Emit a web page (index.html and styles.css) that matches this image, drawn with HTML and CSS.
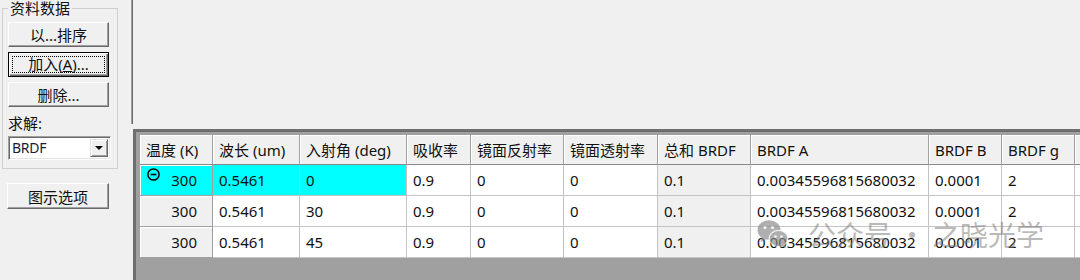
FILE: index.html
```html
<!DOCTYPE html>
<html lang="zh-CN">
<head>
    <meta charset="UTF-8">
    <title>BRDF 资料数据</title>
    <link rel="stylesheet" href="styles.css">
</head>
<body>
    <div class="window">
        <div class="side">
            <fieldset class="group">
                <legend>资料数据</legend>
                <button class="btn first">以...排序</button>
                <button class="btn default"><span class="focus">加入(<u>A</u>)...</span></button>
                <button class="btn">删除...</button>
                <div class="label">求解:</div>
                <div class="combo">
                    <span class="combo-text">BRDF</span>
                    <span class="combo-arrow"><span class="tri"></span></span>
                </div>
            </fieldset>
            <button class="btn plot">图示选项</button>
        </div>

        <div class="main">
            <div class="top-pane"></div>
            <div class="grid-frame">
                <table class="grid">
                    <colgroup>
                        <col style="width:73px">
                        <col style="width:87px">
                        <col style="width:107px">
                        <col style="width:64px">
                        <col style="width:93px">
                        <col style="width:94px">
                        <col style="width:93px">
                        <col style="width:178px">
                        <col style="width:73px">
                        <col style="width:73px">
                        <col style="width:80px">
                    </colgroup>
                    <tr>
                        <th>温度 (K)</th>
                        <th>波长 (um)</th>
                        <th>入射角 (deg)</th>
                        <th>吸收率</th>
                        <th>镜面反射率</th>
                        <th>镜面透射率</th>
                        <th>总和 BRDF</th>
                        <th>BRDF A</th>
                        <th>BRDF B</th>
                        <th>BRDF g</th>
                        <th></th>
                    </tr>
                    <tr>
                        <td class="rowhead sel">
                            <div class="rowhead-in">
                                <svg class="collapse" width="13" height="13" viewBox="0 0 13 13">
                                    <circle cx="6.5" cy="6.5" r="5.6" fill="none" stroke="#000" stroke-width="1.5"/>
                                    <path d="M3.6 6.5h5.8" stroke="#000" stroke-width="1.6"/>
                                </svg>
                                <span>300</span>
                            </div>
                        </td>
                        <td class="sel">0.5461</td>
                        <td class="sel">0</td>
                        <td>0.9</td>
                        <td>0</td>
                        <td>0</td>
                        <td class="ro">0.1</td>
                        <td>0.00345596815680032</td>
                        <td>0.0001</td>
                        <td>2</td>
                        <td></td>
                    </tr>
                    <tr>
                        <td class="rowhead">300</td>
                        <td>0.5461</td>
                        <td>30</td>
                        <td>0.9</td>
                        <td>0</td>
                        <td>0</td>
                        <td class="ro">0.1</td>
                        <td>0.00345596815680032</td>
                        <td>0.0001</td>
                        <td>2</td>
                        <td></td>
                    </tr>
                    <tr>
                        <td class="rowhead">300</td>
                        <td>0.5461</td>
                        <td>45</td>
                        <td>0.9</td>
                        <td>0</td>
                        <td>0</td>
                        <td class="ro">0.1</td>
                        <td>0.00345596815680032</td>
                        <td>0.0001</td>
                        <td>2</td>
                        <td></td>
                    </tr>
                </table>
            </div>
        </div>

        <!-- 水印 -->
        <div class="watermark">
            <svg class="wx" width="32" height="30" viewBox="0 0 32 30">
                <ellipse cx="12" cy="11" rx="11.5" ry="9.8" fill="#8c8c8c"/>
                <path d="M5 18 L3.5 23 L9.5 20 Z" fill="#8c8c8c"/>
                <ellipse cx="21.5" cy="19.5" rx="10" ry="8.5" fill="#f4f4f4"/>
                <ellipse cx="21.5" cy="19.5" rx="8.8" ry="7.4" fill="#8c8c8c"/>
                <path d="M27 25 L29 29 L24 26.5 Z" fill="#8c8c8c"/>
                <circle cx="8" cy="8.5" r="1.6" fill="#f4f4f4"/>
                <circle cx="15.5" cy="8.5" r="1.6" fill="#f4f4f4"/>
                <circle cx="18.5" cy="17.5" r="1.3" fill="#f4f4f4"/>
                <circle cx="24.5" cy="17.5" r="1.3" fill="#f4f4f4"/>
            </svg>
            <span class="wm-text">公众号</span>
            <span class="wm-dot">·</span>
            <span class="wm-text">之晓光学</span>
        </div>
    </div>
</body>
</html>
```

FILE: styles.css
```css
body {
    margin: 0;
    background-color: #f0f0f0;
    font-family: "Noto Sans", "Noto Sans CJK SC", sans-serif;
    font-size: 15px;
    color: #111;
    overflow: hidden;
}
.window {
    display: flex;
    height: 280px;
    width: 1080px;
    position: relative;
    overflow: hidden;
}

/* 左侧面板 */
.side {
    width: 131px;
    flex-shrink: 0;
}
.group {
    margin: 0 0 0 2px;
    padding: 0 0 8px 5px;
    width: 116px;
    min-width: 0;
    box-sizing: border-box;
    border: 1px solid #cfcfcf;
}
.group legend {
    padding: 0 2px;
    margin: 0;
    line-height: 16px;
    font-size: 15px;
}
.btn {
    display: flex;
    align-items: center;
    justify-content: center;
    width: 101px;
    height: 25px;
    margin: 5px 0 0 0;
    padding: 0;
    box-sizing: border-box;
    font-family: inherit;
    font-size: 15px;
    color: #111;
    background-color: #f0f0f0;
    border: 1px solid;
    border-color: #fff #696969 #696969 #fff;
    box-shadow: inset -1px -1px #a0a0a0;
}
.btn.first {
    margin-top: 6px;
}
.btn.default {
    border-color: #000;
    box-shadow: inset 1px 1px #fff, inset -1px -1px #696969, inset -2px -2px #a0a0a0;
}
.focus {
    display: block;
    width: 91px;
    line-height: 15px;
    border: 1px dotted #000;
}
.focus u {
    text-decoration-thickness: 1px;
    text-underline-offset: 1px;
}
.label {
    margin-top: 7px;
    line-height: 18px;
}
.combo {
    display: flex;
    margin-top: 4px;
    width: 103px;
    height: 24px;
    box-sizing: border-box;
    background-color: #fff;
    border: 1px solid;
    border-color: #a0a0a0 #fff #fff #a0a0a0;
    box-shadow: inset 1px 1px #696969, inset -1px -1px #e3e3e3;
    padding: 2px;
}
.combo-text {
    flex: 1;
    font-size: 14px;
    line-height: 18px;
    padding-left: 1px;
    letter-spacing: -0.3px;
    color: #1a1a3a;
}
.combo-arrow {
    width: 18px;
    display: flex;
    align-items: center;
    justify-content: center;
    box-sizing: border-box;
    background-color: #f0f0f0;
    border: 1px solid;
    border-color: #e3e3e3 #696969 #696969 #e3e3e3;
    box-shadow: inset 1px 1px #fff, inset -1px -1px #a0a0a0;
}
.tri {
    width: 0;
    height: 0;
    border-left: 4px solid transparent;
    border-right: 4px solid transparent;
    border-top: 4px solid #000;
}
.btn.plot {
    margin: 14px 0 0 7px;
    width: 102px;
    height: 26px;
}

/* 右侧 */
.main {
    flex: 1;
    display: flex;
    flex-direction: column;
    min-width: 0;
}
.top-pane {
    height: 124px;
    flex-shrink: 0;
    border-left: 1px solid #a0a0a0;
    box-shadow: inset 1px 0 #696969;
    margin-bottom: 5px;
}
.grid-frame {
    flex: 1;
    margin-left: 2px;
    border-top: 3px solid #6e6e6e;
    border-left: 3px solid #6e6e6e;
    background-color: #a0a0a0;
    padding: 3px 0 0 4px;
    overflow: hidden;
}
.grid {
    border-collapse: separate;
    border-spacing: 0;
    table-layout: fixed;
    width: 1015px;
}
.grid th,
.grid td {
    box-sizing: border-box;
    padding: 0 0 0 6px;
    text-align: left;
    font-weight: normal;
    white-space: nowrap;
    overflow: hidden;
    vertical-align: middle;
}
.grid th {
    height: 30px;
    background-color: #f0f0f0;
    border-right: 1px solid #a0a0a0;
    border-bottom: 1px solid #8a8a8a;
    box-shadow: inset 1px 1px #fff;
}
.grid td {
    height: 31px;
    background-color: #fff;
    border-right: 1px solid #c4c4c4;
    border-bottom: 1px solid #c4c4c4;
}
.grid td.rowhead {
    background-color: #f0f0f0;
    text-align: right;
    padding: 0 15px 0 7px;
    border-right: 1px solid #a0a0a0;
    border-bottom: 1px solid #a0a0a0;
    box-shadow: inset 1px 1px #fff;
}
.grid td.ro {
    background-color: #f0f0f0;
}
.grid td.sel {
    background-color: #00ffff;
}
.rowhead-in {
    display: flex;
    justify-content: space-between;
    align-items: center;
    height: 30px;
}
.collapse {
    align-self: flex-start;
    margin-top: 3px;
}

/* 水印 */
.watermark {
    position: absolute;
    left: 757px;
    top: 216px;
    display: flex;
    align-items: center;
    color: rgba(120, 120, 120, 0.6);
    font-family: "Noto Sans CJK SC", sans-serif;
    font-size: 28px;
    line-height: 36px;
    opacity: 0.85;
}
.wx {
    margin-right: 19px;
    opacity: 0.8;
}
.wm-dot {
    width: 40px;
    text-align: center;
}
```
